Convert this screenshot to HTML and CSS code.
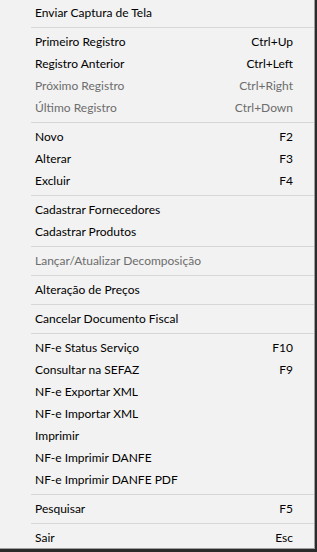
FILE: index.html
```html
<!DOCTYPE html>
<html lang="pt-BR">
<head>
  <meta charset="UTF-8">
  <meta name="viewport" content="width=device-width, initial-scale=1.0">
  <title>Menu de Contexto</title>
  <link rel="stylesheet" href="styles.css">
</head>
<body>
  <div class="menu">
    <div class="item"><span>Enviar Captura de Tela</span></div>
    <div class="sep"></div>
    <div class="item"><span>Primeiro Registro</span><span class="key">Ctrl+Up</span></div>
    <div class="item"><span>Registro Anterior</span><span class="key">Ctrl+Left</span></div>
    <div class="item disabled"><span>Próximo Registro</span><span class="key">Ctrl+Right</span></div>
    <div class="item disabled"><span>Último Registro</span><span class="key">Ctrl+Down</span></div>
    <div class="sep"></div>
    <div class="item"><span>Novo</span><span class="key">F2</span></div>
    <div class="item"><span>Alterar</span><span class="key">F3</span></div>
    <div class="item"><span>Excluir</span><span class="key">F4</span></div>
    <div class="sep"></div>
    <div class="item"><span>Cadastrar Fornecedores</span></div>
    <div class="item"><span>Cadastrar Produtos</span></div>
    <div class="sep"></div>
    <div class="item disabled"><span>Lançar/Atualizar Decomposição</span></div>
    <div class="sep"></div>
    <div class="item"><span>Alteração de Preços</span></div>
    <div class="sep"></div>
    <div class="item"><span>Cancelar Documento Fiscal</span></div>
    <div class="sep"></div>
    <div class="item"><span>NF-e Status Serviço</span><span class="key">F10</span></div>
    <div class="item"><span>Consultar na SEFAZ</span><span class="key">F9</span></div>
    <div class="item"><span>NF-e Exportar XML</span></div>
    <div class="item"><span>NF-e Importar XML</span></div>
    <div class="item"><span>Imprimir</span></div>
    <div class="item"><span>NF-e Imprimir DANFE</span></div>
    <div class="item"><span>NF-e Imprimir DANFE PDF</span></div>
    <div class="sep"></div>
    <div class="item"><span>Pesquisar</span><span class="key">F5</span></div>
    <div class="sep"></div>
    <div class="item"><span>Sair</span><span class="key">Esc</span></div>
  </div>
</body>
</html>
```

FILE: styles.css
```css
/* Windows style context menu */
body {
  margin: 0;
  background-color: #2b2b2b;
  font-family: Lato, "Noto Sans", sans-serif;
  font-size: 12px;
  color: #000;
}

.menu {
  width: 315px;
  height: 549px;
  padding-top: 2px;
  box-sizing: border-box;
  background-color: #f2f2f2;
  border-right: 1px solid #a0a0a0;
  border-bottom: 1px solid #a0a0a0;
}

.item {
  display: flex;
  justify-content: space-between;
  align-items: center;
  height: 22px;
  padding: 0 21px 0 35px;
}

.item span {
  position: relative;
  top: -1px;
}

.item.disabled {
  color: #6d6d6d;
}

.sep {
  height: 1px;
  margin: 3px 0 3px 31px;
  background-color: #d7d7d7;
}
```
